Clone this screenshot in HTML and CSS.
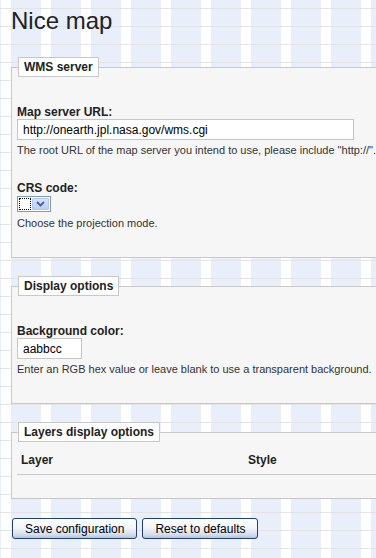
FILE: index.html
```html
<!DOCTYPE html>
<html lang="en">
<head>
  <meta charset="UTF-8">
  <meta name="viewport" content="width=device-width, initial-scale=1.0">
  <title>Nice map</title>
  <link rel="stylesheet" href="styles.css">
</head>
<body>
  <div class="page">
    <h1>Nice map</h1>

    <form class="settings">
      <fieldset>
        <legend>WMS server</legend>
        <div class="form-item">
          <label for="wms-url">Map server URL:</label>
          <input type="text" id="wms-url" class="text url" value="http://onearth.jpl.nasa.gov/wms.cgi">
          <div class="description">The root URL of the map server you intend to use, please include "http://". This is usually the same for every layer.</div>
        </div>
        <div class="form-item">
          <label>CRS code:</label>
          <span class="select">
            <span class="select-value"></span>
            <span class="select-arrow">
              <svg width="9" height="6" viewBox="0 0 9 6"><path d="M1 1 L4.5 4.5 L8 1" fill="none" stroke="#4a5f8c" stroke-width="1.8"/></svg>
            </span>
          </span>
          <div class="description">Choose the projection mode.</div>
        </div>
      </fieldset>

      <fieldset>
        <legend>Display options</legend>
        <div class="form-item">
          <label for="bg-color">Background color:</label>
          <input type="text" id="bg-color" class="text color" value="aabbcc">
          <div class="description">Enter an RGB hex value or leave blank to use a transparent background.</div>
        </div>
      </fieldset>

      <fieldset class="layers">
        <legend>Layers display options</legend>
        <table>
          <thead>
            <tr>
              <th class="col-layer">Layer</th>
              <th>Style</th>
            </tr>
          </thead>
        </table>
      </fieldset>

      <div class="actions">
        <button type="submit" class="button">Save configuration</button>
        <button type="reset" class="button">Reset to defaults</button>
      </div>
    </form>
  </div>
</body>
</html>
```

FILE: styles.css
```css
html, body {
  margin: 0;
  overflow: hidden;
}

body {
  padding: 9px 0 0 11px;
  font-family: "Liberation Sans", Arial, Helvetica, sans-serif;
  font-size: 12px;
  color: #222;
  background-color: #fff;
  /* baseline grid: 18px rows, 30px columns with 10px gutters */
  background-image:
    linear-gradient(to bottom, transparent 8px, #e4e4e4 8px, #e4e4e4 9px, transparent 9px),
    linear-gradient(to right, #e8eefa 30px, transparent 30px);
  background-size: 100% 18px, 40px 100%;
  background-position: 0 0, 11px 0;
}

.page {
  width: 940px;
}

h1 {
  margin: 0 0 24px;
  font-size: 24px;
  line-height: 24px;
  font-weight: normal;
  color: #222;
}

fieldset {
  margin: 0 0 18px;
  padding: 4px 4px 27px 5px;
  border: 1px solid #c8c8c8;
  background: #f6f6f6;
  min-width: 0;
}

legend {
  margin-left: 1px;
  padding: 2px 5px;
  border: 1px solid #c8c8c8;
  background: #fff;
  font-weight: bold;
  font-size: 12px;
  line-height: 14px;
}

.form-item {
  margin-top: 24px;
}

label {
  display: block;
  font-weight: bold;
  line-height: 14px;
}

input.text {
  display: block;
  box-sizing: border-box;
  height: 21px;
  margin: 0 0 3px;
  padding: 0 5px;
  border: 1px solid #c6c6c6;
  background: #fff;
  font-family: "Liberation Sans", Arial, sans-serif;
  font-size: 12px;
  color: #000;
  outline: none;
}

input.url {
  width: 337px;
}

input.color {
  width: 65px;
}

.description {
  font-size: 11px;
  line-height: 14px;
  color: #333;
}

.select {
  display: flex;
  box-sizing: border-box;
  width: 34px;
  height: 16px;
  margin: 1px 0 4px;
  padding: 1px;
  border: 1px solid #7f9db9;
  background: #fff;
}

.select-value {
  flex: 1;
  border: 1px dotted #000;
}

.select-arrow {
  display: flex;
  align-items: center;
  justify-content: center;
  width: 15px;
  margin-left: 1px;
  border: 1px solid #b4c6ee;
  border-radius: 1px;
  background: linear-gradient(to bottom, #d6e2fd, #bccdf7);
}

.layers {
  padding-bottom: 23px;
}

table {
  width: 100%;
  border-collapse: collapse;
}

th {
  padding: 5px 4px;
  line-height: 18px;
  text-align: left;
  font-weight: bold;
  border-bottom: 1px solid #c8c8c8;
}

th.col-layer {
  width: 219px;
}

.actions {
  display: flex;
  gap: 5px;
  padding-top: 1px;
  padding-left: 1px;
}

.button {
  height: 21px;
  padding: 0 12px;
  border: 1px solid #1f3f78;
  border-radius: 3px;
  background: linear-gradient(to bottom, #ffffff 0%, #f3f5f9 45%, #d8dfec 80%, #b8c4dc 100%);
  font-family: "Liberation Sans", Arial, sans-serif;
  font-size: 12px;
  color: #000;
  cursor: pointer;
}
```
